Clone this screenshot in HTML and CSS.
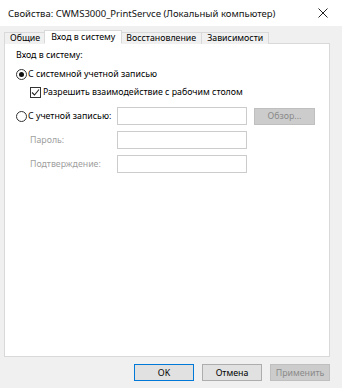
FILE: index.html
```html
<!DOCTYPE html>
<html lang="ru">
<head>
    <meta charset="UTF-8">
    <meta name="viewport" content="width=device-width, initial-scale=1.0">
    <title>Свойства службы</title>
    <link rel="stylesheet" href="styles.css">
</head>
<body>
    <div class="window">
        <!-- Window caption -->
        <div class="titlebar">
            <span class="title">Свойства: CWMS3000_PrintServce (Локальный компьютер)</span>
            <svg class="close" width="10" height="10" viewBox="0 0 10 10">
                <path d="M0.5 0.5 L9.5 9.5 M9.5 0.5 L0.5 9.5" stroke="#222" stroke-width="1" fill="none"/>
            </svg>
        </div>

        <div class="dialog">
            <div class="tabs">
                <div class="tab">Общие</div>
                <div class="tab active">Вход в систему</div>
                <div class="tab">Восстановление</div>
                <div class="tab">Зависимости</div>
            </div>

            <div class="panel">
                <div class="group-label">Вход в систему:</div>

                <div class="radio-row">
                    <span class="radio checked"></span>
                    <span>С системной учетной записью</span>
                </div>

                <div class="check-row">
                    <span class="check">
                        <svg width="9" height="9" viewBox="0 0 9 9">
                            <path d="M1 4.5 L3.5 7 L8 1.5" stroke="#222" stroke-width="1.1" fill="none"/>
                        </svg>
                    </span>
                    <span>Разрешить взаимодействие с рабочим столом</span>
                </div>

                <div class="account-grid">
                    <div class="radio-row tight">
                        <span class="radio"></span>
                        <span>С учетной записью:</span>
                    </div>
                    <div class="field"></div>
                    <button class="btn disabled small" disabled>Обзор...</button>

                    <div class="field-label">Пароль:</div>
                    <div class="field"></div>
                    <div></div>

                    <div class="field-label">Подтверждение:</div>
                    <div class="field"></div>
                    <div></div>
                </div>
            </div>

            <div class="buttons">
                <button class="btn default">OK</button>
                <button class="btn">Отмена</button>
                <button class="btn disabled" disabled>Применить</button>
            </div>
        </div>
    </div>
</body>
</html>
```

FILE: styles.css
```css
* {
    box-sizing: border-box;
}

body {
    margin: 0;
    font-family: "Noto Sans", "Open Sans", "DejaVu Sans", sans-serif;
    font-size: 8.8px;
    color: #000;
    background-color: #f0f0f0;
}

.window {
    width: 342px;
    height: 388px;
    display: flex;
    flex-direction: column;
}

.titlebar {
    height: 26px;
    background-color: #fff;
    display: flex;
    align-items: center;
    justify-content: space-between;
    padding: 0 14px 0 8px;
}

.title {
    font-size: 9.5px;
    color: #111;
}

.dialog {
    flex: 1;
    padding: 4px 12px 0 4px;
    display: flex;
    flex-direction: column;
}

.tabs {
    display: flex;
    align-items: flex-end;
    height: 14px;
    position: relative;
    z-index: 1;
    margin-bottom: -1px;
}

.tab {
    height: 12px;
    line-height: 11px;
    padding: 0 5px;
    border: 1px solid #d9d9d9;
    border-bottom: none;
    margin-right: -1px;
    background-color: #f0f0f0;
    white-space: nowrap;
}

.tab.active {
    height: 14px;
    line-height: 12px;
    padding: 0 6px;
    background-color: #fff;
    border-bottom: 1px solid #fff;
    margin-left: -1px;
    margin-right: -2px;
    position: relative;
    z-index: 2;
}

.panel {
    height: 314px;
    background-color: #fff;
    border: 1px solid #d9d9d9;
    padding: 5px 0 0 11px;
}

.group-label {
    line-height: 12px;
}

.radio-row,
.check-row {
    display: flex;
    align-items: center;
    line-height: 12px;
}

.radio-row {
    margin-top: 7px;
}

.radio-row.tight {
    margin-top: 0;
}

.radio {
    width: 11px;
    height: 11px;
    border: 1px solid #333;
    border-radius: 50%;
    margin-right: 1px;
    display: flex;
    align-items: center;
    justify-content: center;
    flex-shrink: 0;
}

.radio.checked::after {
    content: "";
    width: 5px;
    height: 5px;
    border-radius: 50%;
    background-color: #111;
}

.check-row {
    margin-top: 6px;
    padding-left: 14px;
}

.check {
    width: 11px;
    height: 11px;
    border: 1px solid #333;
    margin-right: 2px;
    display: flex;
    align-items: center;
    justify-content: center;
}

.account-grid {
    margin-top: 9px;
    display: grid;
    grid-template-columns: 101px 130px 68px;
    row-gap: 6px;
    align-items: center;
}

.field {
    height: 18px;
    border: 1px solid #cccccc;
    background-color: #fff;
}

.field-label {
    padding-left: 14px;
    color: #a0a0a0;
}

.btn {
    font-family: inherit;
    font-size: 8.8px;
    width: 60px;
    height: 17px;
    padding: 0;
    border: 1px solid #adadad;
    background-color: #e1e1e1;
    color: #000;
}

.btn.default {
    border-color: #0078d7;
}

.btn.disabled {
    background-color: #cccccc;
    border-color: #bfbfbf;
    color: #8a8a8a;
}

.btn.small {
    width: 61px;
    height: 17px;
    margin-left: 7px;
}

.buttons {
    display: flex;
    justify-content: flex-end;
    gap: 8px;
    margin-top: 7px;
}
```
